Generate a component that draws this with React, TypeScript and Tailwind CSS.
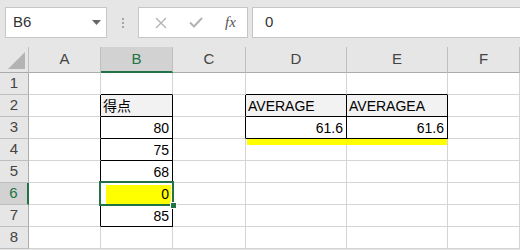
import React from 'react';

const cols = ['A', 'B', 'C', 'D', 'E', 'F'];
const rows = [1, 2, 3, 4, 5, 6, 7, 8];

// cells with black borders (col index 0=A)
const boxed = new Set(['1-2', '1-3', '1-4', '1-5', '1-6', '1-7', '3-2', '4-2', '3-3', '4-3']);
const isBoxed = (c: number, r: number) => boxed.has(`${c}-${r}`);

const values: Record<string, { text: string; right?: boolean; gray?: boolean }> = {
  '1-2': { text: '得点', gray: true },
  '1-3': { text: '80', right: true },
  '1-4': { text: '75', right: true },
  '1-5': { text: '68', right: true },
  '1-6': { text: '0', right: true },
  '1-7': { text: '85', right: true },
  '3-2': { text: 'AVERAGE', gray: true },
  '4-2': { text: 'AVERAGEA', gray: true },
  '3-3': { text: '61.6', right: true },
  '4-3': { text: '61.6', right: true },
};

function Cell({ c, r }: { c: number; r: number }) {
  const rightBlack = isBoxed(c, r) || isBoxed(c + 1, r);
  const bottomBlack = isBoxed(c, r) || isBoxed(c, r + 1);
  const v = values[`${c}-${r}`];
  const yellow = c === 1 && r === 6;
  const strip = r === 4 && (c === 3 || c === 4);
  return (
    <div
      className={`relative h-[22px] border-r border-b flex items-center text-[14px] leading-none text-black ${
        rightBlack ? 'border-r-black' : 'border-r-[#d4d4d4]'
      } ${bottomBlack ? 'border-b-black' : 'border-b-[#d4d4d4]'} ${v?.gray ? 'bg-[#f2f2f2]' : 'bg-white'} ${
        v?.right ? 'justify-end pr-[3px]' : 'justify-start pl-[2px]'
      }`}
    >
      {yellow && <div className="absolute left-[5px] right-[1px] top-[2px] bottom-0 bg-[#ffff00]" />}
      {strip && (
        <div
          className={`absolute z-10 top-0 h-[6px] bg-[#ffff00] ${c === 3 ? 'left-[1px] right-[-1px]' : 'left-0 right-0'}`}
        />
      )}
      {v && <span className="relative pt-[1px]">{v.text}</span>}
    </div>
  );
}

export default function App() {
  return (
    <div
      className="w-[520px] h-[250px] overflow-hidden bg-[#e6e6e6] relative"
      style={{ fontFamily: '"Liberation Sans", "Noto Sans CJK JP", sans-serif' }}
    >
      {/* formula bar */}
      <div className="h-[47px] flex items-start pt-[7px] pl-[5px]">
        <div className="w-[102px] h-[31px] bg-white border border-[#c6c6c6] flex items-center justify-between pl-[7px] pr-[5px]">
          <span className="text-[15px] text-[#333]">B6</span>
          <svg width="9" height="5" viewBox="0 0 9 5">
            <path d="M0 0 L9 0 L4.5 5 Z" fill="#666" />
          </svg>
        </div>
        <div className="w-[31px] h-[31px] flex flex-col items-center justify-center gap-[2px]">
          <div className="w-[2px] h-[2px] bg-[#a6a6a6]" />
          <div className="w-[2px] h-[2px] bg-[#a6a6a6]" />
          <div className="w-[2px] h-[2px] bg-[#a6a6a6]" />
        </div>
        <div className="w-[110px] h-[31px] bg-white border border-[#c6c6c6] flex items-center">
          <svg width="12" height="12" viewBox="0 0 12 12" className="ml-[16px]">
            <path d="M1 1 L11 11 M11 1 L1 11" stroke="#b3b3b3" strokeWidth="1.4" />
          </svg>
          <svg width="14" height="11" viewBox="0 0 14 11" className="ml-[22px]">
            <path d="M1 5.5 L5 9.5 L13 1" stroke="#b3b3b3" strokeWidth="2" fill="none" />
          </svg>
          <span
            className="ml-[22px] text-[15px] italic text-[#555] leading-none"
            style={{ fontFamily: '"Liberation Serif", serif' }}
          >
            fx
          </span>
        </div>
        <div className="ml-[4px] flex-1 h-[31px] bg-white border border-[#c6c6c6] border-r-0 flex items-center pl-[12px]">
          <span className="text-[15px] text-[#333]">0</span>
        </div>
      </div>

      {/* sheet */}
      <div className="grid grid-cols-[29px_72px_72px_73px_101px_101px_72px]">
        {/* corner */}
        <div className="h-[26px] bg-[#e6e6e6] border-r border-b border-r-[#bfbfbf] border-b-[#ababab] flex items-end justify-end pr-[3px] pb-[3px]">
          <svg width="17" height="17" viewBox="0 0 17 17">
            <path d="M17 0 L17 17 L0 17 Z" fill="#b4b4b4" />
          </svg>
        </div>
        {cols.map((c) => (
          <div
            key={c}
            className={`h-[26px] flex items-center justify-center text-[15px] border-r border-r-[#bfbfbf] ${
              c === 'B'
                ? 'bg-[#d2d2d2] text-[#217346] border-b-2 border-b-[#217346]'
                : 'bg-[#e6e6e6] text-[#444] border-b border-b-[#ababab]'
            }`}
          >
            {c}
          </div>
        ))}

        {rows.map((r) => (
          <React.Fragment key={r}>
            <div
              className={`h-[22px] flex items-center justify-center text-[15px] border-b border-b-[#bfbfbf] ${
                r === 6
                  ? 'bg-[#d2d2d2] text-[#217346] border-r-2 border-r-[#217346]'
                  : 'bg-[#e6e6e6] text-[#444] border-r border-r-[#ababab]'
              }`}
            >
              {r}
            </div>
            {cols.map((_, c) => (
              <Cell key={c} c={c} r={r} />
            ))}
          </React.Fragment>
        ))}
      </div>

      {/* active cell outline */}
      <div className="absolute z-20 left-[99px] top-[181px] w-[75px] h-[25px] border-2 border-[#217346] pointer-events-none" />
      <div className="absolute z-20 left-[170px] top-[202px] w-[5px] h-[5px] bg-[#217346] border border-white box-content pointer-events-none" />
    </div>
  );
}
